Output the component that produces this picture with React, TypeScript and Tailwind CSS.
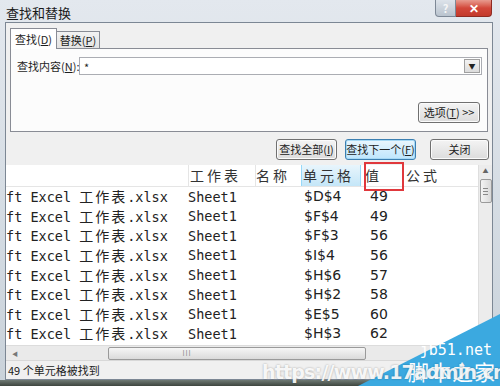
import React from 'react';

const rows = [
  { cell: '$D$4', value: '49' },
  { cell: '$F$4', value: '49' },
  { cell: '$F$3', value: '56' },
  { cell: '$I$4', value: '56' },
  { cell: '$H$6', value: '57' },
  { cell: '$H$2', value: '58' },
  { cell: '$E$5', value: '60' },
  { cell: '$H$3', value: '62' },
];

const Btn: React.FC<{ w: string; focused?: boolean; children: React.ReactNode }> = ({ w, focused, children }) => (
  <div
    className={`${w} h-[21px] flex items-center justify-center whitespace-nowrap rounded-[3px] text-[11px] text-[#222] ${
      focused
        ? 'border border-[#3c7fb1] bg-gradient-to-b from-[#eaf6fd] to-[#bee6fd] shadow-[inset_0_0_0_1px_#a7d9f5]'
        : 'border border-[#707070] bg-gradient-to-b from-[#f4f4f4] to-[#dcdcdc] shadow-[inset_0_0_0_1px_#fbfbfb]'
    }`}
  >
    {children}
  </div>
);

export default function App() {
  return (
    <div className="w-[500px] h-[386px] relative overflow-hidden bg-gradient-to-b from-[#e3e8ee] to-[#c9d2da] font-['Noto_Sans_CJK_SC',sans-serif] text-[12px] text-[#1e1e1e]">
      {/* Title bar */}
      <div className="h-[22px] flex items-start relative">
        <span className="pl-[6px] pt-[3px] text-[13px] text-[#1a1a1a]">查找和替换</span>
        <div className="ml-auto mr-[8px] flex">
          <div className="w-[21px] h-[17px] rounded-bl-[4px] border border-t-0 border-[#7d8896] bg-gradient-to-b from-[#dde3ea] to-[#b9c3ce] flex items-center justify-center text-[11px] text-[#f6f6f6] font-bold">
            ?
          </div>
          <div className="w-[36px] h-[17px] rounded-br-[4px] border border-t-0 border-l-0 border-[#8f2b22] bg-gradient-to-b from-[#e79a8f] via-[#d2473a] to-[#c33a2c] flex items-center justify-center text-[12px] text-white font-bold">
            ✕
          </div>
        </div>
      </div>

      {/* Dialog body */}
      <div className="ml-[5px] mr-[7px] h-[358px] border border-[#7c8794] bg-[#f0f0f0] flex flex-col">
        {/* Tabs */}
        <div className="px-[4px] pt-[5px]">
          <div className="flex items-end h-[20px]">
            <div className="w-[47px] h-[21px] -mb-px relative z-10 border border-b-0 border-[#898c95] bg-white flex items-center justify-center text-[11px] whitespace-nowrap">
              查找(<span className="underline">D</span>)
            </div>
            <div className="w-[43px] h-[17px] border border-l-0 border-b-0 border-[#898c95] bg-gradient-to-b from-[#f2f2f2] to-[#e3e3e3] flex items-center justify-center text-[11px] whitespace-nowrap">
              替换(<span className="underline">P</span>)
            </div>
          </div>
          <div className="h-[84px] border border-[#898c95] bg-[#fcfcfc] pl-[6px] pr-[5px] pt-[8px] flex flex-col">
            <div className="flex items-center h-[18px]">
              <span className="w-[62px] shrink-0 whitespace-nowrap text-[11px]">
                查找内容(<span className="underline">N</span>):
              </span>
              <div className="flex-1 h-[18px] border border-[#abadb3] bg-white flex items-center">
                <span className="pl-[4px] pt-[3px] text-[11px]">*</span>
                <div className="ml-auto mr-px w-[16px] h-[14px] border border-[#a0a0a0] bg-gradient-to-b from-[#f3f3f3] to-[#dcdcdc] flex items-center justify-center text-[7px] text-[#222]">
                  ▼
                </div>
              </div>
            </div>
            <div className="mt-auto mb-[8px] mr-[2px] self-end">
              <Btn w="w-[62px]">
                选项(<span className="underline">T</span>)&nbsp;&gt;&gt;
              </Btn>
            </div>
          </div>
        </div>

        {/* Action buttons */}
        <div className="mt-[7px] pr-[3px] flex justify-end">
          <Btn w="w-[61px]">
            查找全部(<span className="underline">I</span>)
          </Btn>
          <div className="ml-[8px]">
            <Btn w="w-[71px]" focused>
              查找下一个(<span className="underline">F</span>)
            </Btn>
          </div>
          <div className="ml-[14px]">
            <Btn w="w-[59px]">关闭</Btn>
          </div>
        </div>

        {/* Result list */}
        <div className="mt-[5px] h-[195px] bg-white flex">
          <div className="flex-1 flex flex-col overflow-hidden">
            {/* Header */}
            <div className="h-[22px] shrink-0 flex items-stretch border-b border-[#e5e5e5] text-[14px] text-[#333] tracking-[3px]">
              <div className="w-[182px]" />
              <div className="w-[67px] pl-[1px] flex items-center border-l border-[#e5e5e5]">工作表</div>
              <div className="w-[46px] flex items-center border-l border-[#e5e5e5]">名称</div>
              <div className="w-[60px] pl-[1px] flex items-center bg-gradient-to-b from-[#e8f5fc] to-[#c4e6f8] border-x border-[#96d9f9]">
                单元格
              </div>
              <div className="w-[42px] pl-[4px] flex items-center">值</div>
              <div className="flex-1 pl-[2px] flex items-center border-l border-[#e5e5e5]">公式</div>
            </div>
            {/* Rows */}
            <div className="flex-1 overflow-hidden font-['DejaVu_Sans_Mono','Noto_Sans_CJK_SC',monospace] text-[13.5px] text-[#222]">
              {rows.map((r, i) => (
                <div key={i} className="h-[19.6px] flex items-center whitespace-nowrap">
                  <div className="w-[182px] overflow-hidden">
                    ft Excel <span className="font-['Noto_Sans_CJK_SC',sans-serif] tracking-[2px] text-[14px]">工作表</span>.xlsx
                  </div>
                  <div className="w-[113px]">Sheet1</div>
                  <div className="w-[3px]" />
                  <div className="w-[66px] font-['DejaVu_Sans',sans-serif] text-[14px]">{r.cell}</div>
                  <div className="font-['DejaVu_Sans',sans-serif] text-[14px]">{r.value}</div>
                </div>
              ))}
            </div>
            {/* Horizontal scrollbar */}
            <div className="h-[15px] shrink-0 bg-[#eaeaea] border-t border-[#dcdcdc] flex items-center relative">
              <span className="ml-[6px] text-[6px] text-[#777]">◀</span>
              <div className="ml-[90px] w-[258px] h-[13px] rounded-[2px] border border-[#9a9a9a] bg-gradient-to-b from-[#f6f6f6] to-[#dadada] flex items-center justify-center text-[7px] text-[#888] tracking-[1px]">
                <span className="-ml-[100px]">III</span>
              </div>
            </div>
          </div>
          {/* Vertical scrollbar */}
          <div className="w-[14px] shrink-0 bg-[#ececec] border-l border-[#dedede] flex flex-col items-center">
            <span className="mt-[3px] text-[6px] text-[#666] leading-none">▲</span>
            <div className="mt-[5px] w-[12px] h-[24px] rounded-[2px] border border-[#9a9a9a] bg-gradient-to-r from-[#f4f4f4] to-[#d8d8d8] flex flex-col items-center justify-center gap-[2px]">
              <div className="w-[5px] h-px bg-[#888]" />
              <div className="w-[5px] h-px bg-[#888]" />
              <div className="w-[5px] h-px bg-[#888]" />
            </div>
            <div className="mt-auto h-[15px] w-full bg-[#f0f0f0]" />
          </div>
        </div>

        {/* Status bar */}
        <div className="flex-1 flex items-center pl-[2px] text-[11px] text-[#222] border-t border-[#d8d8d8]">
          49 个单元格被找到
        </div>
      </div>

      {/* Bottom frame */}
      <div className="h-[6px] bg-gradient-to-b from-[#6f7a74] to-[#3e463f]" />

      {/* Red highlight box over the 值 column */}
      <div className="absolute left-[364px] top-[162px] w-[40px] h-[29px] border-2 border-[#e0383c]" />

      {/* Watermark */}
      <svg className="absolute left-0 top-0" width="500" height="386" viewBox="0 0 500 386">
        <polygon points="358,386 500,314 500,386" fill="#3ba9e0" />
      </svg>
      <div className="absolute right-[8px] top-[343px] text-[15px] text-white font-['DejaVu_Sans_Mono',monospace] leading-none">
        jb51.net
      </div>
      <div className="absolute right-[4px] top-[361px] text-[21px] text-white leading-none tracking-[1px]">
        脚本之家
      </div>
      <div className="absolute left-[262px] top-[363px] text-[19px] font-bold text-white/90 font-['DejaVu_Sans',sans-serif] leading-none tracking-[-0.8px] [text-shadow:0_0_2px_rgba(0,0,0,0.35)]">
        https://www.17admin.cn
      </div>
    </div>
  );
}
